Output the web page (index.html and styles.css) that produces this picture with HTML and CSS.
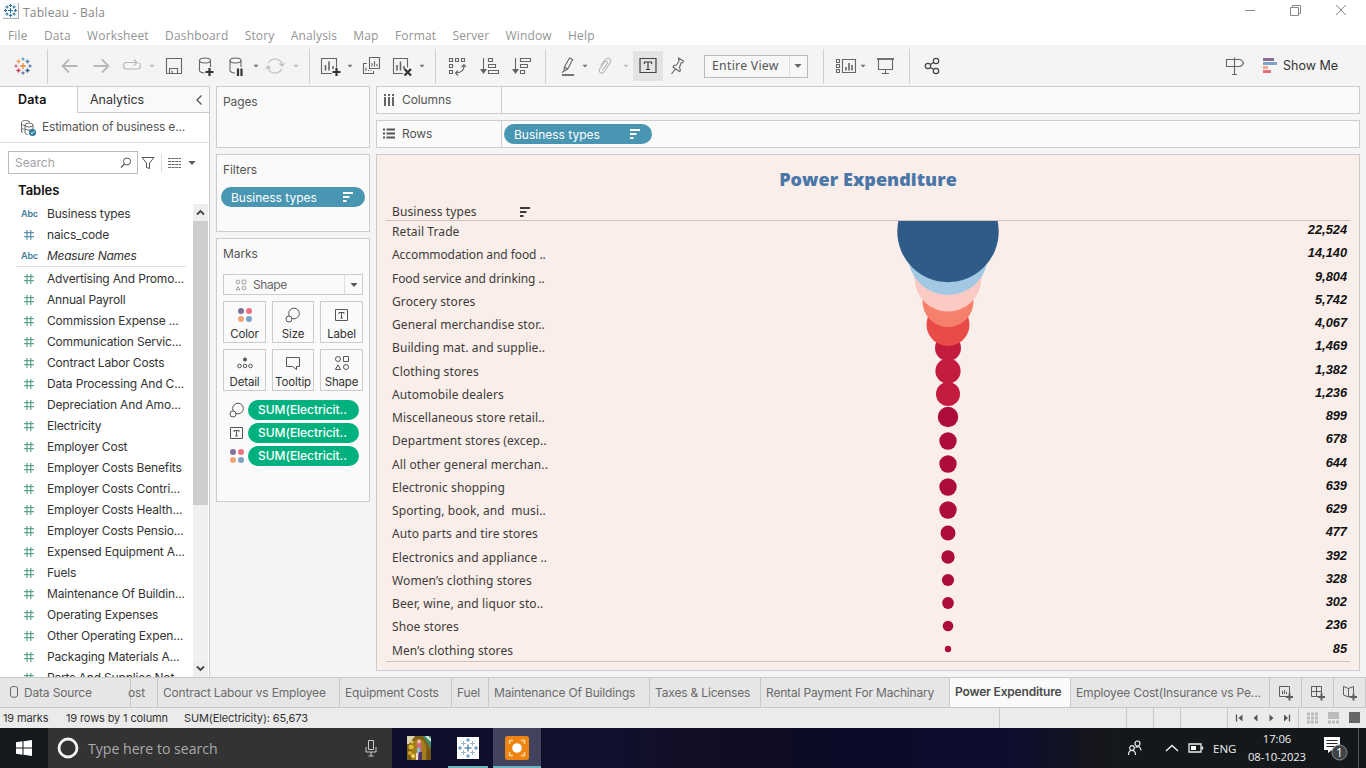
FILE: index.html
```html
<!DOCTYPE html>
<html lang="en">
<head>
<meta charset="utf-8">
<title>Tableau - Bala</title>
<link rel="stylesheet" href="styles.css">
</head>
<body>
<svg class="defs" width="0" height="0">
  <symbol id="caret" viewBox="0 0 8 24"><path d="M1.500 10.800h5L4 13.500z" fill="currentColor"/></symbol>
  <symbol id="hash" viewBox="0 0 12 12"><path d="M1 3.700h10M1 7.700h10M4 1v10M7.800 1v10" stroke="currentColor" fill="none"/></symbol>
  <symbol id="sort" viewBox="0 0 12 12"><path d="M1 2h10M1 6h6.500M1 10h3.500" stroke="currentColor" stroke-width="1.800" fill="none"/></symbol>
  <symbol id="size" viewBox="0 0 16 16"><circle cx="9" cy="6.500" r="5.300" fill="none" stroke="#555"/><circle cx="4" cy="12" r="3" fill="#fafafa" stroke="#555"/></symbol>
  <symbol id="label" viewBox="0 0 16 16"><path d="M1.500 2.500h12v11h-12zM5 7V5.500h5V7M7.500 5.500v5.500M6.200 11h2.600" fill="none" stroke="#555"/></symbol>
  <symbol id="color" viewBox="0 0 16 16"><circle cx="4" cy="4" r="3" fill="#85709b"/><circle cx="12" cy="4" r="3" fill="#ed7482"/><circle cx="4" cy="12" r="3" fill="#f0a578"/><circle cx="12" cy="12" r="3" fill="#7ba3c7"/></symbol>
  <symbol id="shapes" viewBox="0 0 16 16"><g fill="none" stroke="currentColor"><circle cx="4" cy="4" r="2.500"/><path d="M9.500 1.500h5v5h-5zM4 9.800l2.600 4.700H1.400z"/><circle cx="12" cy="12" r="2.500"/></g></symbol>
</svg>

<header class="titlebar">
  <svg class="app-icon" viewBox="0 0 16 16" width="16" height="16"><rect width="16" height="16" fill="#f4f8fa"/><path d="M15.500 0v15.500H0" fill="none" stroke="#aaa"/><path d="M7.500 5v5M5 7.500h5M7.500 1v3M6 2.500h3M7.500 11v3M6 12.500h3M2.500 6v3M1 7.500h3M12.500 6v3M11 7.500h3M4 2.500v3M2.500 4h3M11 2.500v3M9.500 4h3M4 9.500v3M2.500 11h3M11 9.500v3M9.500 11h3" stroke="#2a7096" fill="none"/></svg>
  <span class="title">Tableau - Bala</span>
  <svg class="window-controls" viewBox="0 0 110 20" width="110" height="20"><g fill="none" stroke="#888"><path d="M5 10.500h10M50.500 7.500h8v8h-8zM52.500 7.500v-2h8v8h-2M96 5l10 10M106 5L96 15"/></g></svg>
</header>
<nav class="menubar"><span>File</span><span>Data</span><span>Worksheet</span><span>Dashboard</span><span>Story</span><span>Analysis</span><span>Map</span><span>Format</span><span>Server</span><span>Window</span><span>Help</span></nav>

<div class="toolbar">
  <svg class="ic" viewBox="0 0 24 24"><g fill="none" stroke-width="1.300"><path d="M12 9v6M9 12h6" stroke="#ee8b31"/><path d="M12 3.500v3M10.500 5h3" stroke="#6aa0b5"/><path d="M12 17.500v3M10.500 19h3" stroke="#6b72a8"/><path d="M5 10.500v3M3.500 12h3" stroke="#c06d88"/><path d="M19 10.500v3M17.500 12h3" stroke="#5b87a8"/><path d="M7.500 5.500v4M5.500 7.500h4" stroke="#eda15b"/><path d="M16.500 5.500v4M14.500 7.500h4" stroke="#5489a8"/><path d="M7.500 14.500v4M5.500 16.500h4" stroke="#c5375c"/><path d="M16.500 14.500v4M14.500 16.500h4" stroke="#31598c"/></g></svg>
  <i class="sep"></i>
  <svg class="ic off thick" viewBox="0 0 24 24"><path d="M19.500 12H5M11 5.500L4.500 12l6.500 6.500"/></svg>
  <svg class="ic off thick" viewBox="0 0 24 24"><path d="M4.500 12H19M13 5.500l6.500 6.500-6.500 6.500"/></svg>
  <svg class="ic off" viewBox="0 0 24 24"><path d="M12 8.500H7.500a3 3 0 0 0-3 3v.5a3 3 0 0 0 3 3h11a3 3 0 0 0 3-3v-.5a3 3 0 0 0-2-2.800M10 8.500h7.500M15 5.500l3 3-3 3"/></svg>
  <svg class="caret off"><use href="#caret"/></svg>
  <svg class="ic" viewBox="0 0 24 24"><path d="M4.500 4.500h15v15h-15zM7.500 19v-4.500h8V19M10 19v-2.500"/></svg>
  <svg class="ic" viewBox="0 0 24 24"><ellipse cx="11" cy="6.500" rx="5.500" ry="2.500"/><path d="M5.500 6.500v10.500c1 1.500 3 2 5 2M16.500 6.500V13"/><path d="M15.500 14v8M11.500 18h8" class="bold"/></svg>
  <svg class="ic" viewBox="0 0 24 24"><ellipse cx="10.500" cy="6.500" rx="5.500" ry="2.500"/><path d="M5 6.500v10.500c1 1.500 3 2 5 2M16 6.500V13"/><path d="M13 14.500v7.500M16.500 14.500v7.500" class="bold"/></svg>
  <svg class="caret"><use href="#caret"/></svg>
  <svg class="ic off" viewBox="0 0 24 24"><path d="M5.500 9a7.300 7.300 0 0 1 13.700 2M18.500 15a7.300 7.300 0 0 1-13.700-2M16.500 9.500l2.700 2.500 2.300-3M2.500 15l2.300-3 2.700 2.500"/></svg>
  <svg class="caret off"><use href="#caret"/></svg>
  <i class="sep"></i>
  <svg class="ic" viewBox="0 0 24 24"><path d="M13 19.500H2.500v-15h15v9"/><path d="M6.500 11v5.500M10 7.500v9M14 12v3" stroke-width="1.600"/><path d="M17.500 14v8M13.500 18h8" class="bold"/></svg>
  <svg class="caret"><use href="#caret"/></svg>
  <svg class="ic" viewBox="0 0 24 24"><path d="M10.500 3.500h10v11h-10zM8 9.500H4.500v10h10V17M13 9v3.500M15.500 7v5.500M18 10v2.500M7 13.500V17M9.500 16v1M12 16v1"/></svg>
  <svg class="ic" viewBox="0 0 24 24"><path d="M13 19.500H3.500v-15h14v9"/><path d="M7 11v5.500M10.500 7.500v9M14 12v3" stroke-width="1.600"/><path d="M14.500 15l6.500 6.500M21 15l-6.500 6.500" class="bold"/></svg>
  <svg class="caret"><use href="#caret"/></svg>
  <i class="sep"></i>
  <svg class="ic" viewBox="0 0 24 24"><path d="M4.500 4.500h3v3h-3zM10.500 4.500h3v3h-3zM16.500 4.500h3v3h-3zM4.500 10.500h3v3h-3zM4.500 16.500h3v3h-3zM19 11c.5 5-3 8-8.500 8M16.500 13l2.500-2.500 2 2.500M13 16.500L10.500 19l2.500 2.500"/></svg>
  <svg class="ic" viewBox="0 0 24 24"><path d="M5.500 4v14M10.500 4.500h4v3h-4zM10.500 10.500h7v3h-7zM10.500 16.500h10v3h-10z"/><path d="M3 15.500l2.500 3.500L8 15.500z" fill="#555"/></svg>
  <svg class="ic" viewBox="0 0 24 24"><path d="M5.500 4v14M10.500 4.500h10v3h-10zM10.500 10.500h7v3h-7zM10.500 16.500h4v3h-4z"/><path d="M3 15.500l2.500 3.500L8 15.500z" fill="#555"/></svg>
  <i class="sep"></i>
  <svg class="ic" viewBox="0 0 24 24"><path d="M8.500 13l5-9 3.200 1.500-5 9.500-3.700 2zM8.500 13l3.200 2M8 17l-2 1.500"/><path d="M6 21h12" stroke-width="1.800"/></svg>
  <svg class="caret"><use href="#caret"/></svg>
  <svg class="ic off" viewBox="0 0 24 24"><path d="M7.500 11.500l5-6c2-2.500 6-1 5 2.500l-6 9.500c-2 3-6 1.500-5-2l5.500-8c1-1 3 0 2.500 1.500l-5 7.500"/></svg>
  <svg class="caret off"><use href="#caret"/></svg>
  <span class="pressed"><svg class="ic dark" viewBox="0 0 24 24"><path d="M4 4.500h16v14H4zM8.500 10V8h7v2M12 8v7.500M10 15.500h4"/></svg></span>
  <svg class="ic" viewBox="0 0 24 24"><path d="M12.500 4l5 3-.8 1.500-1.700.5-1.500 4.500 1 3-1 1-6.500-4.500.8-1.500 2.700-.5 2.500-4zM9.500 15l-4 5"/></svg>
  <div class="fit-select"><span>Entire View</span><svg viewBox="0 0 10 8" width="10" height="8"><path d="M1.500 2h7L5 6z" fill="#666"/></svg></div>
  <i class="sep"></i>
  <svg class="ic" viewBox="0 0 24 24"><path d="M2.500 5.500h3v3h-3zM2.500 10.500h3v3h-3zM2.500 15.500h3v3h-3zM8.500 5.500h13v13h-13z"/><path d="M12 13v3.500M15 9v7.500M18 11v5.500" stroke-width="1.600"/></svg>
  <svg class="caret"><use href="#caret"/></svg>
  <svg class="ic" viewBox="0 0 24 24"><path d="M5.500 5v10.500h14V5M12.500 15.500v4M9 19.500h7"/><path d="M4 5h17" stroke-width="1.800"/></svg>
  <i class="sep"></i>
  <svg class="ic dark" viewBox="0 0 24 24"><circle cx="8" cy="12" r="2.700"/><circle cx="16" cy="7" r="2.700"/><circle cx="16" cy="17" r="2.700"/><path d="M10.300 10.500l3.300-2M10.300 13.500l3.300 2"/></svg>
  <svg class="ic" viewBox="0 0 24 24"><path d="M12.500 3.500v16.500M10 20.500h5M4.500 5.500h13q2.500 0 4 3.500-1.500 3.500-4 3.500h-13z"/></svg>
  <div class="show-me"><svg viewBox="0 0 15 16" width="15" height="16"><path d="M1 0h11v3H1z" fill="#85709b"/><path d="M1 4h14v3H1z" fill="#7ba3cb"/><path d="M1 8h5v3H1z" fill="#efa88b"/><path d="M1 12h8v3H1z" fill="#e6727d"/></svg><span>Show Me</span></div>
</div>

<main class="workspace">
  <aside class="data-pane">
    <div class="pane-tabs"><b>Data</b><span>Analytics<svg viewBox="0 0 8 12" width="8" height="12"><path d="M6.500 1.500L2 6l4.500 4.500" fill="none" stroke="#555" stroke-width="1.300"/></svg></span></div>
    <div class="source"><svg viewBox="0 0 18 18" width="18" height="18"><g fill="none" stroke="#666"><path d="M4 13H2.500V3C4 1 9 1 11 3M2.500 5c1 1.500 3 1.500 4 1M2.500 9c1 1 2 1.500 3 1"/><ellipse cx="10" cy="6" rx="4" ry="2"/><path d="M6 6v8c1 1 2 1.500 3 1.500M14 6v4M6 10c2 1.500 6 1.500 8 0"/></g><circle cx="13.500" cy="13.500" r="3.600" fill="#2f7fa3"/><path d="M11.700 13.500l1.300 1.300 2.300-2.600" stroke="#fff" fill="none"/></svg><span>Estimation of business e...</span></div>
    <div class="search-row">
      <div class="search"><span>Search</span><svg viewBox="0 0 12 12" width="12" height="12"><circle cx="7" cy="4.500" r="3.500" fill="none" stroke="#555"/><path d="M4.500 7L1 10.500" stroke="#555" stroke-width="1.200"/></svg></div>
      <svg class="funnel" viewBox="0 0 14 14" width="14" height="14"><path d="M1 1.500h12L8.500 7v5.500l-3-1V7z" fill="none" stroke="#555"/></svg>
      <i></i>
      <svg class="view-list" viewBox="0 0 13 11" width="13" height="11"><path d="M0 1.500h13M0 4.500h13M0 7.500h13M0 10.500h13" stroke="#666" stroke-dasharray="3 .6"/></svg>
      <svg class="view-caret" viewBox="0 0 8 6" width="8" height="6"><path d="M.5 1h7L4 5z" fill="#555"/></svg>
    </div>
    <h2>Tables</h2>
    <div class="fields-wrap">
      <ul class="fields">
        <li><b>Abc</b>Business types</li>
        <li class="blue"><svg><use href="#hash"/></svg>naics_code</li>
        <li class="last-dim"><b>Abc</b><em>Measure Names</em></li>
        <li><svg><use href="#hash"/></svg>Advertising And Promo...</li>
        <li><svg><use href="#hash"/></svg>Annual Payroll</li>
        <li><svg><use href="#hash"/></svg>Commission Expense ...</li>
        <li><svg><use href="#hash"/></svg>Communication Servic...</li>
        <li><svg><use href="#hash"/></svg>Contract Labor Costs</li>
        <li><svg><use href="#hash"/></svg>Data Processing And C...</li>
        <li><svg><use href="#hash"/></svg>Depreciation And Amo...</li>
        <li><svg><use href="#hash"/></svg>Electricity</li>
        <li><svg><use href="#hash"/></svg>Employer Cost</li>
        <li><svg><use href="#hash"/></svg>Employer Costs Benefits</li>
        <li><svg><use href="#hash"/></svg>Employer Costs Contri...</li>
        <li><svg><use href="#hash"/></svg>Employer Costs Health...</li>
        <li><svg><use href="#hash"/></svg>Employer Costs Pensio...</li>
        <li><svg><use href="#hash"/></svg>Expensed Equipment A...</li>
        <li><svg><use href="#hash"/></svg>Fuels</li>
        <li><svg><use href="#hash"/></svg>Maintenance Of Buildin...</li>
        <li><svg><use href="#hash"/></svg>Operating Expenses</li>
        <li><svg><use href="#hash"/></svg>Other Operating Expen...</li>
        <li><svg><use href="#hash"/></svg>Packaging Materials A...</li>
        <li><svg><use href="#hash"/></svg>Parts And Supplies Not...</li>
      </ul>
      <div class="scrollbar">
        <svg viewBox="0 0 15 17" width="15" height="17"><path d="M4 10.500L7.500 7l3.500 3.500" fill="none" stroke="#444" stroke-width="1.800"/></svg>
        <div class="thumb"></div>
        <svg class="down" viewBox="0 0 15 17" width="15" height="17"><path d="M4 6.500L7.500 10 11 6.500" fill="none" stroke="#444" stroke-width="1.800"/></svg>
      </div>
    </div>
  </aside>

  <section class="cards">
    <div class="card pages"><h3>Pages</h3></div>
    <div class="card filters"><h3>Filters</h3><div class="pill blue-pill">Business types<svg><use href="#sort"/></svg></div></div>
    <div class="card marks"><h3>Marks</h3>
      <div class="mark-type"><svg viewBox="0 0 16 16"><use href="#shapes"/></svg><span>Shape</span><i><svg viewBox="0 0 8 6" width="8" height="6"><path d="M.5 1h7L4 5z" fill="#555"/></svg></i></div>
      <div class="mark-grid">
        <div><svg><use href="#color"/></svg>Color</div>
        <div><svg><use href="#size"/></svg>Size</div>
        <div><svg><use href="#label"/></svg>Label</div>
        <div><svg viewBox="0 0 16 16"><circle cx="8" cy="4.500" r="2" fill="#555"/><g fill="none" stroke="#555"><circle cx="2.500" cy="11" r="1.800"/><circle cx="8" cy="11" r="1.800"/><circle cx="13.500" cy="11" r="1.800"/></g></svg>Detail</div>
        <div><svg viewBox="0 0 16 16"><path d="M1.500 2.500h13v9h-3v3l-4-3h-6z" fill="none" stroke="#555"/></svg>Tooltip</div>
        <div><svg><use href="#shapes"/></svg>Shape</div>
      </div>
      <div class="encoding"><svg><use href="#size"/></svg><span class="pill green-pill">SUM(Electricit..</span></div>
      <div class="encoding"><svg><use href="#label"/></svg><span class="pill green-pill">SUM(Electricit..</span></div>
      <div class="encoding"><svg><use href="#color"/></svg><span class="pill green-pill">SUM(Electricit..</span></div>
    </div>
  </section>

  <section class="sheet">
    <div class="shelf"><div class="shelf-name"><svg viewBox="0 0 12 12" width="12" height="12"><path d="M2 3v9M6 3v9M10 3v9M2 0v2M6 0v2M10 0v2" stroke="#555" stroke-width="1.800"/></svg><span>Columns</span></div></div>
    <div class="shelf"><div class="shelf-name"><svg viewBox="0 0 12 12" width="12" height="12"><path d="M3.500 1.500H12M3.500 5.500H12M3.500 9.500H12M0 1.500h2M0 5.500h2M0 9.500h2" stroke="#555" stroke-width="1.800"/></svg><span>Rows</span></div><div class="pill blue-pill">Business types<svg><use href="#sort"/></svg></div></div>
    <div class="viz">
      <h1>Power Expenditure</h1>
      <div class="viz-head">Business types<svg viewBox="0 0 12 12"><use href="#sort"/></svg></div>
      <div class="plot">
        <ol class="names">
          <li>Retail Trade</li><li class="tight">Accommodation and food ..</li><li class="tight">Food service and drinking ..</li><li>Grocery stores</li><li>General merchandise stor..</li><li>Building mat. and supplie..</li><li>Clothing stores</li><li>Automobile dealers</li><li>Miscellaneous store retail..</li><li>Department stores (excep..</li><li>All other general merchan..</li><li>Electronic shopping</li><li>Sporting, book, and&nbsp; musi..</li><li>Auto parts and tire stores</li><li>Electronics and appliance ..</li><li>Women’s clothing stores</li><li>Beer, wine, and liquor sto..</li><li>Shoe stores</li><li>Men’s clothing stores</li>
        </ol>
        <svg class="funnel-chart" viewBox="0 0 120 440" width="120" height="440">
          <g fill="#ac0d3b"><circle cx="60" cy="428" r="3.200"/><circle cx="60" cy="405" r="5.300"/><circle cx="60" cy="382" r="5.900"/><circle cx="60" cy="359" r="6.100"/><circle cx="60" cy="336" r="6.700"/><circle cx="60" cy="312" r="7.500"/><circle cx="60" cy="289" r="8.700"/><circle cx="60" cy="266" r="8.700"/><circle cx="60" cy="243" r="8.700"/><circle cx="60" cy="220" r="8.700"/><circle cx="60" cy="196" r="10.200"/></g>
          <g fill="#c31c3f"><circle cx="60" cy="173" r="12"/><circle cx="60" cy="150" r="12.600"/><circle cx="60" cy="127" r="13"/></g>
          <circle cx="60" cy="103.500" r="21.500" fill="#e94b49"/>
          <circle cx="60" cy="80.500" r="25.500" fill="#f5806b"/>
          <circle cx="60" cy="57" r="33.500" fill="#fccac4"/>
          <circle cx="60" cy="34" r="40" fill="#a2c8e4"/>
          <circle cx="60" cy="10.500" r="50.700" fill="#2e5b87"/>
        </svg>
        <ol class="values">
          <li>22,524</li><li>14,140</li><li>9,804</li><li>5,742</li><li>4,067</li><li>1,469</li><li>1,382</li><li>1,236</li><li>899</li><li>678</li><li>644</li><li>639</li><li>629</li><li>477</li><li>392</li><li>328</li><li>302</li><li>236</li><li>85</li>
        </ol>
      </div>
    </div>
  </section>
</main>

<nav class="sheet-tabs">
  <span class="ds"><svg viewBox="0 0 10 14" width="10" height="14"><path d="M1.500 3v8c1.500 1.800 5.500 1.800 7 0V3M1.500 3c0-2 7-2 7 0" fill="none" stroke="#666"/></svg>Data Source</span>
  <span class="cut">ost</span>
  <span class="t1">Contract Labour vs Employee</span>
  <span class="t2">Equipment Costs</span>
  <span class="t3">Fuel</span>
  <span class="t4">Maintenance Of Buildings</span>
  <span class="t5">Taxes &amp; Licenses</span>
  <span class="t6">Rental Payment For Machinary</span>
  <span class="t7 active">Power Expenditure</span>
  <span class="t8">Employee Cost(Insurance vs Pe...</span>
  <span class="add"><svg viewBox="0 0 16 16"><path d="M10 11.500H1.500v-10h10V9M4.500 6v3M6.500 5v4M8.500 7v2"/><path d="M11.500 8.500v7M8 12h7" stroke-width="2"/></svg></span>
  <span class="add"><svg viewBox="0 0 16 16"><path d="M9 11.500H1.500v-10h10V9M6.500 1.500v10M1.500 6.500h10"/><path d="M11.500 8.500v7M8 12h7" stroke-width="2"/></svg></span>
  <span class="add"><svg viewBox="0 0 16 16"><path d="M8 11.500l-1.500.5-5-2V1.500l5 2 5-2V8M6.500 3.500V12"/><path d="M11.500 8.500v7M8 12h7" stroke-width="2"/></svg></span>
</nav>
<footer class="status">
  <span class="st1">19 marks</span><span class="st2">19 rows by 1 column</span><span class="st3">SUM(Electricity): 65,673</span>
  <div class="cells"><i></i><i></i><i></i><i></i><i class="nav"><svg viewBox="0 0 64 12" width="64" height="12"><path d="M4.500 2.500v7M57.500 2.500v7" stroke="#555" stroke-width="1.300"/><path d="M10.500 2.500v7L6.500 6zM25.500 2.500v7l-4-3.500zM37.500 2.500v7l4-3.500zM52 2.500v7l4-3.500z" fill="#555"/></svg></i><i class="modes"><svg viewBox="0 0 54 12" width="54" height="12"><path d="M0 2h11M0 6h11M0 10h11" stroke="#bbb" stroke-width="3" stroke-dasharray="3 1"/><path d="M21 0h11v7H21z" fill="#bbb"/><path d="M21 10h11" stroke="#bbb" stroke-width="3" stroke-dasharray="3 1"/><path d="M42 0h11v11H42z" fill="#666"/></svg></i></div>
</footer>

<footer class="taskbar">
  <div class="start"><svg viewBox="0 0 16 16" width="16" height="16"><path d="M0 2.300L6.500 1.300V7.500H0zM7.500 1.200L16 0v7.500H7.500zM0 8.500h6.500v6.200L0 13.700zM7.500 8.500H16V16l-8.500-1.200z" fill="#fff"/></svg></div>
  <div class="win-search"><svg class="ring" viewBox="0 0 22 22" width="22" height="22"><circle cx="11" cy="11" r="9" fill="none" stroke="#f2f2f2" stroke-width="2.800"/></svg><span>Type here to search</span><svg viewBox="0 0 12 18" width="12" height="18"><path d="M3.500 1.500h5v9h-5zM1 8v5h10V8M6 13v4M3.500 17h5" fill="none" stroke="#ccc"/></svg></div>
  <div class="apps">
    <div class="app"><svg viewBox="0 0 24 24" width="24" height="24"><rect width="24" height="24" fill="#806119"/><path d="M0 0h8L2 8H0z" fill="#d9d6b0"/><path d="M16 0h8v13z" fill="#3c8e6d"/><path d="M18 0l6 6V3l-3-3z" fill="#e9eee0"/><path d="M5 24V11q1-8 7-8t7 9v12z" fill="#a47d1c"/><circle cx="4" cy="11" r="2.500" fill="#e0bd33"/><circle cx="3" cy="17" r="2" fill="#d5ab28"/><circle cx="6" cy="20" r="2" fill="#f4db59"/><circle cx="5" cy="6" r="1.500" fill="#e9cb62"/><path d="M10 6h4l1 18h-5z" fill="#cf6b86"/><path d="M10 12h3v5h-3z" fill="#7ec0d3"/><path d="M12 16h3v8h-4z" fill="#463b66"/><path d="M20 13h4v11h-4z" fill="#725414"/><circle cx="12" cy="5.500" r="2" fill="#efb1a8"/><path d="M9 17h2v7H9z" fill="#f1ddd6"/></svg></div>
    <div class="app open"><svg viewBox="0 0 22 22" width="22" height="22"><rect width="22" height="22" fill="#fff"/><g fill="none" stroke="#5183aa"><path d="M11 7.500v7M7.500 11h7" stroke="#215d8b"/><path d="M11 1v4M9 3h4M11 17v4M9 19h4M3 9v4M1 11h4M19 9v4M17 11h4"/><path d="M6.500 4v5M4 6.500h5M15.500 4v5M13 6.500h5M6.500 13v5M4 15.500h5M15.500 13v5M13 15.500h5" stroke="#9bb7cc"/></g></svg></div>
    <div class="app open focused"><svg viewBox="0 0 24 24" width="24" height="24"><rect width="24" height="24" rx="2.500" fill="#ee8512"/><circle cx="12" cy="12" r="4.800" fill="#fff"/><path d="M4.500 8V4.500H8M16 4.500h3.500V8M19.500 16v3.500H16M8 19.500H4.500V16" fill="none" stroke="#ffd59c" stroke-width="1.500"/></svg></div>
  </div>
  <div class="tray">
    <svg class="people" viewBox="0 0 16 16"><g fill="none" stroke="#eee" stroke-width="1.200"><circle cx="5" cy="8" r="2.300"/><path d="M1.500 15q0-4.500 3.500-4.500T8.500 15"/><circle cx="10.500" cy="3.500" r="2.500"/><path d="M8.500 7.500q5-2.500 5.500 3"/></g></svg>
    <svg class="up" viewBox="0 0 14 8"><path d="M1 7l6-5.500L13 7" fill="none" stroke="#eee" stroke-width="1.400"/></svg>
    <svg class="battery" viewBox="0 0 16 10"><path d="M1 1h12v8H1zM14.500 3.500v3" fill="none" stroke="#eee" stroke-width="1.300"/><path d="M3 3h5v4H3z" fill="#fff"/></svg>
    <span class="lang">ENG</span>
    <span class="clock">17:06<br>08-10-2023</span>
    <svg class="notify" viewBox="0 0 26 26"><path d="M1 1h16v13H9l-4 3v-3H1z" fill="#fff"/><path d="M3.500 4.500h11M3.500 7.500h11M3.500 10.500h8" stroke="#24272a"/><circle cx="16.500" cy="16.500" r="7.500" fill="#404346" stroke="#8a8c8e"/><text x="16.500" y="21" text-anchor="middle" font-size="12" font-family="Open Sans, sans-serif" fill="#fff">1</text></svg>
    <i></i>
  </div>
</footer>
</body>
</html>
```
FILE: styles.css
```css
* { box-sizing: border-box; }
body { margin: 0; width: 1366px; height: 768px; overflow: hidden; display: flex; flex-direction: column; background: #f4f4f4; font-family: Inter, "Noto Sans", sans-serif; font-size: 12px; color: #333; white-space: nowrap; }
i { font-style: normal; }
h1, h2, h3, ul, ol { margin: 0; padding: 0; list-style: none; }
.defs { position: absolute; }
svg { flex: none; }

.titlebar { height: 24px; background: #fff; display: flex; align-items: flex-start; padding: 3px 16px 0 3px; font-family: "Open Sans", sans-serif; color: #888; }
.title { margin-left: 4px; line-height: 19px; font-size: 12px; letter-spacing: .25px; }
.window-controls { margin: -3px 0 0 auto; }
.menubar { height: 21px; background: #fff; display: flex; gap: 16.3px; padding-left: 8px; line-height: 23px; font-family: "Open Sans", sans-serif; color: #949494; letter-spacing: .15px; }

.toolbar { height: 39px; flex: none; padding: 3px 0 0 11px; display: grid; align-items: center; grid-template-columns: 36px 11px 31px 30px 29px 14px 32px 31px 27px 11px 29px 17px 10px 27px 13px 31px 28px 17px 10px 33px 32px 35px 11px 25px 12px 29px 11px 33px 38px 119px 11px 25px 14px 36px 11px 302px 40px 1fr; }
.ic { width: 24px; height: 24px; fill: none; stroke: #666; stroke-width: 1.1; display: block; }
.ic .bold { stroke: #333; stroke-width: 2.2; }
.ic.off { stroke: #b8b8b8; }
.ic.thick { stroke-width: 1.8; }
.ic.dark { stroke: #444; stroke-width: 1.2; }
.caret { width: 8px; height: 24px; color: #707070; }
.caret.off { color: #bbb; }
.sep { width: 1px; height: 35px; background: #cfcfcf; align-self: end; }
.pressed { width: 30px; height: 30px; background: #e3e3e3; display: flex; align-items: center; justify-content: center; }
.fit-select { width: 104px; height: 23px; border: 1px solid #bbb; background: #f7f7f7; display: flex; align-items: center; padding-left: 7px; font-size: 12.3px; color: #555; font-family: "Noto Sans", sans-serif; }
.fit-select span { width: 78px; border-right: 1px solid #ddd; line-height: 20px; height: 21px; margin-right: 3px; letter-spacing: .25px; }
.show-me { display: flex; gap: 6px; align-items: center; color: #333; font-size: 12.5px; }
.show-me span { margin-top: -2px; }

.workspace { flex: none; height: 593px; padding: 2px 6px 0 0; display: flex; }
.data-pane { width: 210px; height: 591px; background: #fff; border: solid #ccc; border-width: 1px 1px 0 0; display: flex; flex-direction: column; }
.pane-tabs { display: flex; height: 26px; flex: none; font-size: 12.5px; line-height: 25px; }
.pane-tabs b { width: 77px; padding-left: 18px; color: #111; font-weight: 600; letter-spacing: .2px; }
.pane-tabs span { flex: 1; background: #f9f9f9; border: solid #ccc; border-width: 0 0 1px 1px; padding: 0 6px 0 12px; display: flex; justify-content: space-between; align-items: center; }
.source { height: 30px; flex: none; border-bottom: 1px solid #ddd; display: flex; align-items: center; gap: 5px; padding-left: 19px; color: #555; letter-spacing: -.2px; }
.source span { margin-top: -2px; }
.search-row { height: 23px; flex: none; margin: 8px 0 0 8px; display: flex; align-items: center; }
.search { width: 130px; height: 23px; border: 1px solid #bbb; display: flex; align-items: center; justify-content: space-between; padding: 0 5px 0 6px; color: #a2a2a8; }
.funnel { margin: 0 5px 0 3px; }
.search-row i { width: 1px; height: 18px; background: #ddd; margin: 0 6px 0 1px; }
.view-caret { margin-left: 7px; }
h2 { font-size: 13px; font-weight: 600; color: #111; line-height: 16px; margin: 8px 0 5px 18px; flex: none; }
.fields-wrap { flex: 1; min-height: 0; display: flex; overflow: hidden; }
.fields { width: 193px; }
.fields li { height: 21px; line-height: 21px; display: flex; align-items: center; letter-spacing: -.17px; color: #333; }
.fields svg { width: 12px; height: 12px; margin: 0 12px 0 23px; color: #3f9579; }
.fields .blue svg { color: #447f9b; }
.fields b { width: 26px; margin-left: 21px; font-size: 9px; font-weight: 600; color: #47809c; }
.fields .last-dim { height: 23px; padding-bottom: 2px; position: relative; }
.last-dim::after { content: ""; position: absolute; left: 16px; right: 7px; bottom: 1px; height: 1px; background: #ddd; }
.fields .last-dim em { letter-spacing: -.3px; }
.scrollbar { width: 15px; background: #f0f0f0; display: flex; flex-direction: column; margin-top: 1px; }
.scrollbar svg { background: #eee; display: block; }
.thumb { height: 284px; background: #cdcdcd; }
.scrollbar .down { margin-top: auto; }

.cards { width: 154px; margin-left: 6px; display: flex; flex-direction: column; gap: 6px; }
.card { border: 1px solid #ccc; background: #fafafa; padding: 0 4px; }
.card h3 { font-size: 12px; font-weight: 400; color: #555; line-height: 16px; margin: 7px 0 0 2px; letter-spacing: -.1px; }
.pages { height: 62px; }
.filters { height: 78px; }
.marks { height: 264px; }
.pill { display: flex; align-items: center; justify-content: space-between; height: 20px; border-radius: 10px; color: #fff; }
.blue-pill { background: #4996b2; padding: 0 11px 0 10px; }
.filters .pill { margin-top: 9px; width: 144px; }
.pill svg { width: 12px; height: 12px; }
.green-pill { background: #00b180; width: 111px; padding-left: 10px; font-weight: 500; letter-spacing: -.05px; line-height: 18px; padding-bottom: 1px; }
.mark-type { width: 140px; height: 21px; border: 1px solid #ccc; margin: 12px 0 6px 2px; display: flex; align-items: center; color: #666; letter-spacing: -.4px; }
.mark-type > svg { width: 12px; height: 12px; margin: 0 6px 0 11px; color: #888; }
.mark-type i { margin-left: auto; width: 18px; height: 19px; border-left: 1px solid #ddd; display: flex; align-items: center; justify-content: center; }
.mark-grid { display: grid; grid-template-columns: 43px 42px 43px; column-gap: 6px; row-gap: 6px; margin: 0 0 9px 2px; }
.mark-grid div { height: 42px; border: 1px solid #ccc; display: flex; flex-direction: column; align-items: center; padding-top: 5px; line-height: 17px; gap: 3px; font-size: 11.5px; letter-spacing: -.15px; }
.mark-grid svg { width: 16px; height: 16px; color: #555; }
.encoding { display: flex; align-items: center; gap: 3px; padding-left: 8px; height: 20px; margin-bottom: 3px; }
.encoding > svg { width: 16px; height: 16px; }

.sheet { width: 984px; margin-left: 6px; display: flex; flex-direction: column; gap: 6px; }
.shelf { height: 28px; border: 1px solid #ccc; background: #fafafa; display: flex; align-items: center; }
.shelf-name { width: 125px; height: 26px; border-right: 1px solid #ccc; padding-left: 6px; display: flex; align-items: center; gap: 7px; color: #555; letter-spacing: -.1px; }
.shelf-name span { margin-top: -1px; }
.shelf .pill { width: 148px; margin-left: 2px; }
.viz { height: 517px; border: 1px solid #ccc; background: #f9eee9; padding: 0 9px; font-family: "Noto Sans", sans-serif; color: #3d3b3a; }
h1 { font-family: "Open Sans", sans-serif; font-weight: 800; font-size: 18px; color: #4a76a8; text-align: center; line-height: 24px; padding: 12px 0; letter-spacing: .05px; }
.viz-head { height: 18px; border-bottom: 1px solid #ccc3c0; padding-left: 6px; line-height: 18px; display: flex; align-items: center; letter-spacing: .1px; }
.viz-head svg { width: 12px; height: 12px; margin-left: 42px; }
.plot { height: 441px; border-bottom: 1px solid #ccc3c0; display: grid; grid-template-columns: 502px 120px 1fr; }
.names, .values { display: grid; grid-template-rows: repeat(19, 23.25px); height: 440px; align-items: center; }
.names { padding-left: 6px; letter-spacing: .1px; margin-top: -1px; }
.names .tight { letter-spacing: -.08px; }
.values { font: italic bold 12.8px "Liberation Sans", sans-serif; color: #111; text-align: right; padding-right: 3px; margin-top: -3px; }
.funnel-chart { display: block; }

.sheet-tabs { height: 31px; flex: none; border: solid #c8c8c8; border-width: 1px 0; display: flex; background: #e6e6e6; color: #6b6b6b; line-height: 29px; letter-spacing: -.17px; }
.sheet-tabs span { flex: none; border-right: 1px solid #c8c8c8; padding-left: 5px; }
.sheet-tabs .ds { width: 131px; display: flex; align-items: center; padding-left: 9px; gap: 5px; }
.sheet-tabs .ds svg { margin-top: -2px; }
.sheet-tabs .cut { width: 27px; padding: 0 12px 0 0; display: flex; justify-content: flex-end; }
.t1 { width: 182px; } .t2 { width: 112px; } .t3 { width: 37px; } .t4 { width: 161px; } .t5 { width: 111px; } .t6 { width: 189px; } .t7 { width: 121px; } .t8 { width: 199px; }
.sheet-tabs .active { background: #fafafa; color: #4a4a4a; font-weight: 600; line-height: 27px; }
.sheet-tabs .add { width: 32px; padding-left: 8px; display: flex; align-items: center; }
.add svg { width: 16px; height: 16px; fill: none; stroke: #5c5c5c; }
.status { height: 20px; flex: none; background: #ebebeb; display: flex; line-height: 20px; font-size: 11px; padding-left: 3px; letter-spacing: -.12px; }
.st1 { width: 63px; } .st2 { width: 118px; }
.cells { display: flex; margin-left: auto; width: 367px; }
.cells i { border-left: 1px solid #c8c8c8; width: 27px; display: flex; align-items: center; }
.cells i:first-child { width: 127px; }
.cells i:nth-child(4) { width: 47px; }
.cells .nav { width: 71px; padding-left: 4px; }
.cells .modes { width: 68px; padding-left: 8px; }

.taskbar { height: 40px; flex: none; display: flex; background: linear-gradient(90deg, #0e0e2c 392px, #10112f 600px, #120e26 680px, #0e0d22 760px, #0b0a28 860px, #0d0d30 1010px, #14151c 1090px, #15181b 1120px); color: #eee; font-family: "Open Sans", sans-serif; }
.start { width: 48px; background: #15191c; display: flex; align-items: center; justify-content: center; }
.win-search { width: 344px; background: #333; display: flex; align-items: center; font-size: 14.1px; color: #aaa; padding: 0 15px 0 9px; }
.win-search span { margin: 0 auto 0 9px; }
.apps { display: flex; padding-left: 2px; }
.app { width: 50px; display: flex; align-items: center; justify-content: center; }
.app.open { width: 40px; margin: 0 5px 0 4px; border-bottom: 2px solid #69b5bd; padding-top: 2px; }
.app.focused { width: 48px; margin: 0; background: #44435e; }
.tray { margin-left: auto; width: 239px; display: flex; align-items: center; font-size: 12px; }
.people { width: 16px; height: 16px; }
.up { width: 14px; height: 8px; margin-left: 22px; }
.battery { width: 16px; height: 10px; margin-left: 9px; }
.lang { margin-left: 9px; width: 24px; font-size: 11.5px; }
.clock { width: 80px; text-align: center; line-height: 18px; font-size: 11.3px; letter-spacing: -.1px; }
.notify { width: 26px; height: 26px; margin: 2px 9px 0 6px; }
.tray > i { width: 1px; height: 40px; background: #555; margin-right: 4px; }
```
